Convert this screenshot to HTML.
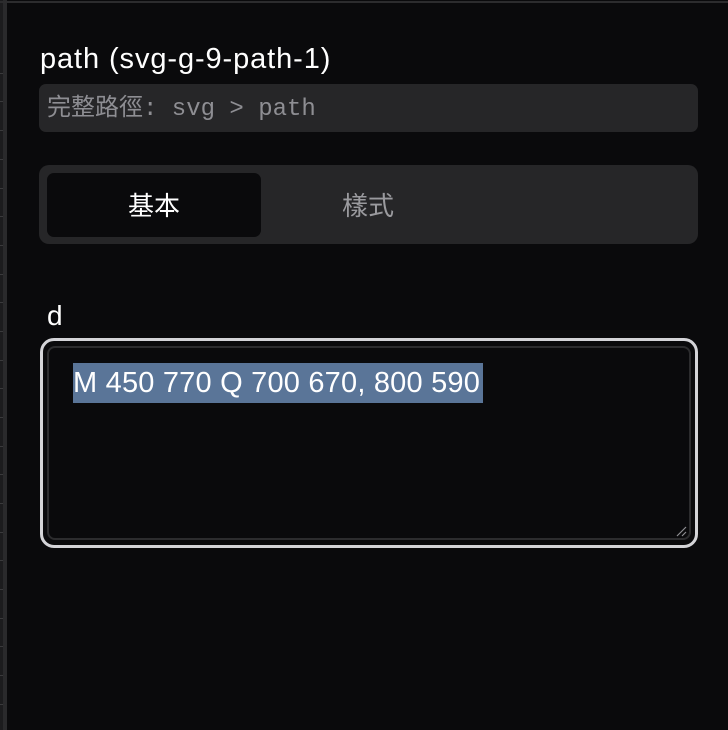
<!DOCTYPE html>
<html><head><style>
html,body{margin:0;padding:0;width:728px;height:730px;overflow:hidden;background:#0a0a0c;font-family:"Liberation Sans","Noto Sans CJK TC",sans-serif;}
.strip{position:absolute;left:0;top:0;width:3px;height:730px;background:#1c1c1e;}
.vline{position:absolute;left:3px;top:0;width:4px;height:730px;background:#2a2a2c;}
.top{position:absolute;left:0;top:1px;width:728px;height:2px;background:#2c2c2e;}
.tick{position:absolute;left:0;width:3px;height:1px;background:#3a3a3c;}
.title{position:absolute;left:40px;top:42px;font-size:29px;line-height:34px;color:#fff;letter-spacing:0.9px;}
.pathbox{position:absolute;left:39px;top:84px;width:659px;height:48px;background:#262628;border-radius:7px;}
.pathbox span{position:absolute;left:8px;top:12px;font-family:"Liberation Mono","Noto Sans CJK TC",monospace;font-size:24px;line-height:28px;color:#8e8e93;}
.tabs{position:absolute;left:39px;top:165px;width:659px;height:79px;background:#262628;border-radius:10px;}
.act{position:absolute;left:8px;top:8px;width:214px;height:64px;background:#0a0a0c;border-radius:7px;}
.t1{position:absolute;left:47px;top:190px;width:214px;text-align:center;font-size:26px;line-height:32px;color:#fff;}
.t2{position:absolute;left:261px;top:190px;width:214px;text-align:center;font-size:26px;line-height:32px;color:#9a9a9e;}
.d{position:absolute;left:47px;top:299px;font-size:28px;line-height:34px;color:#fff;}
.ta{position:absolute;left:40px;top:338px;width:652px;height:204px;border:3px solid #d4d4d8;border-radius:14px;}
.inner{position:absolute;left:4px;top:5px;right:4px;bottom:5px;border:2px solid #2c2c2e;border-radius:8px;}
.sel{position:absolute;left:73px;top:363px;width:410px;height:40px;background:#5a7598;color:#fff;font-size:29px;line-height:40px;white-space:nowrap;letter-spacing:0.2px;overflow:hidden;}
</style></head><body>
<div class="strip"></div><div class="vline"></div><div class="top"></div>
<div class="tick" style="top:73px"></div><div class="tick" style="top:101px"></div><div class="tick" style="top:130px"></div><div class="tick" style="top:159px"></div><div class="tick" style="top:188px"></div><div class="tick" style="top:216px"></div><div class="tick" style="top:245px"></div><div class="tick" style="top:274px"></div><div class="tick" style="top:302px"></div><div class="tick" style="top:331px"></div><div class="tick" style="top:360px"></div><div class="tick" style="top:388px"></div><div class="tick" style="top:417px"></div><div class="tick" style="top:446px"></div><div class="tick" style="top:474px"></div><div class="tick" style="top:503px"></div><div class="tick" style="top:532px"></div><div class="tick" style="top:560px"></div><div class="tick" style="top:589px"></div><div class="tick" style="top:618px"></div><div class="tick" style="top:646px"></div><div class="tick" style="top:675px"></div><div class="tick" style="top:704px"></div>
<div class="title">path (svg-g-9-path-1)</div>
<div class="pathbox"><span>完整路徑: svg &gt; path</span></div>
<div class="tabs"><div class="act"></div></div>
<div class="t1">基本</div><div class="t2">樣式</div>
<div class="d">d</div>
<div class="ta"><div class="inner"></div>
<svg style="position:absolute;right:8px;bottom:8px" width="12" height="12"><path d="M11 2L2 11M11 7L7 11" stroke="#8e8e93" stroke-width="1.2"/></svg></div>
<div class="sel">M 450 770 Q 700 670, 800 590</div>
</body></html>
